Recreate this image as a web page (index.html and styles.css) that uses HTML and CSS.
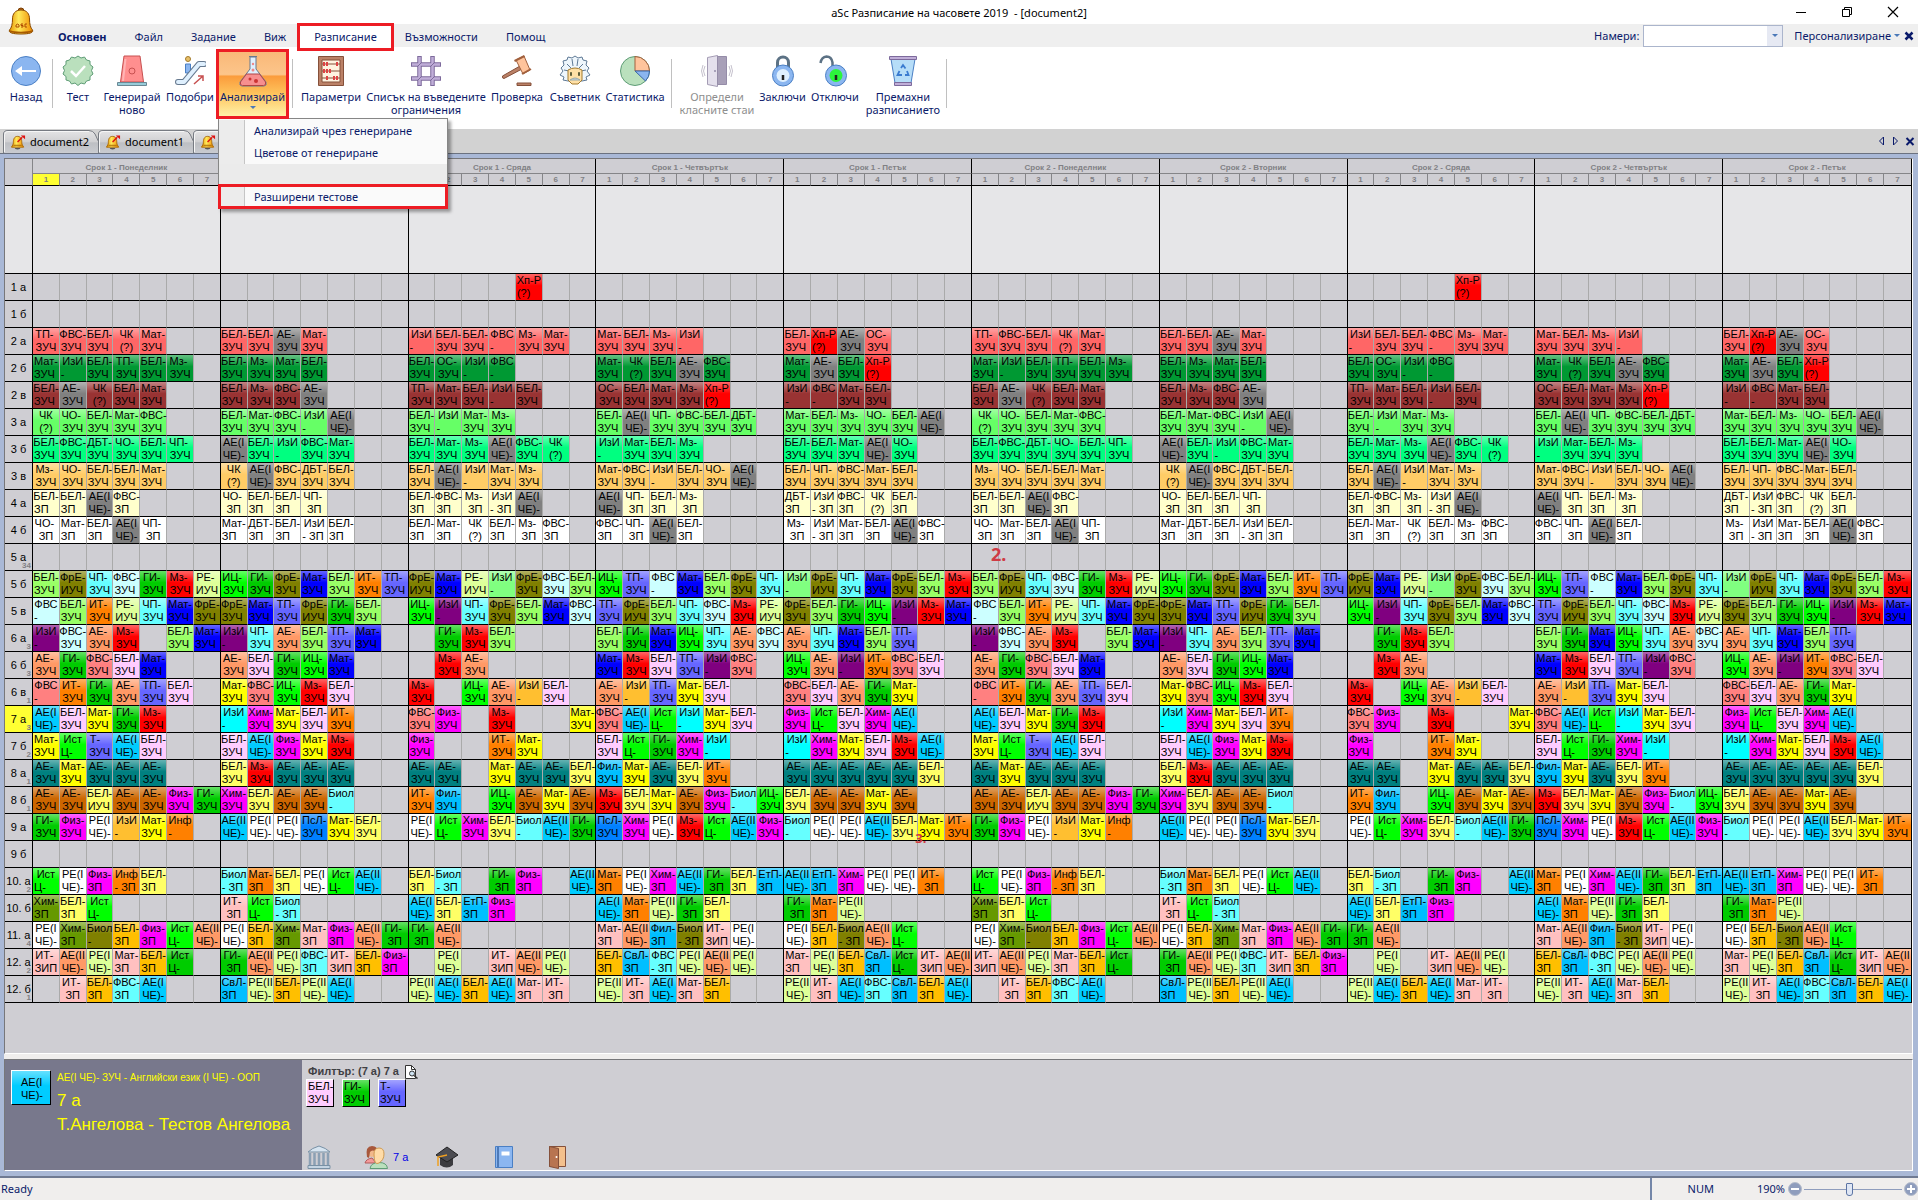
FILE: index.html
```html
<!DOCTYPE html>
<html lang="bg">
<head>
<meta charset="utf-8">
<title>aSc Разписание на часовете 2019 - [document2]</title>
<link rel="stylesheet" href="styles.css">
</head>
<body>
<svg class="defs" aria-hidden="true">
  <defs>
    <linearGradient id="gold" x1="0" x2="1" y1="0" y2="0"><stop offset="0" stop-color="#e89400"/><stop offset=".4" stop-color="#ffe95a"/><stop offset="1" stop-color="#f08c00"/></linearGradient>
    <linearGradient id="tabfill" x1="0" x2="0" y1="0" y2="1"><stop offset="0" stop-color="#e4e4e5"/><stop offset=".5" stop-color="#d0d0d2"/><stop offset=".55" stop-color="#bdbfc3"/><stop offset="1" stop-color="#c9cbd0"/></linearGradient>
    <symbol id="bell" viewBox="0 0 26 30">
      <circle cx="13" cy="4" r="3" fill="#b5651d" stroke="#7a3d00"/>
      <path d="M13 3c6 0 8.500 4 8.500 9 0 5 1 9 3 11 1 2-1 4-11.500 4S.5 25 1.500 23c2-2 3-6 3-11 0-5 2.500-9 8.500-9z" fill="url(#gold)" stroke="#8a4a00"/>
      <path d="M2 24c5 2 17 2 22 0" fill="none" stroke="#a85a00" stroke-width="1.500"/>
      <path d="M8 18q2-2 3 0v2H8zM15 17h-2v1.500h2V20h-2M19 17h-2v3h2" fill="none" stroke="#b04a00"/>
    </symbol>
    <symbol id="minibell" viewBox="0 0 16 16">
      <path d="M4 14.500a3 1.500 0 0 0 6 0z" fill="#555"/>
      <path d="M7 2c4 0 4.500 4 4.500 6.500s1 3 2 5H.5c1-2 2-2.500 2-5S3 2 7 2z" fill="url(#gold)" stroke="#a86400"/>
      <path d="M2.500 11.500h9" stroke="#a86400"/>
      <path d="M7 8l5-5" stroke="#d11" stroke-width="1.500"/><path d="M10.500 1H15v4z" fill="#d11"/>
    </symbol>
    <symbol id="doctab" viewBox="0 0 104 24" preserveAspectRatio="none">
      <path d="M.5 24V5Q.5 1.500 5 1.500H86Q90 1.500 92 5L99 20Q101 23.500 104 23.500" fill="url(#tabfill)" stroke="#777b82"/>
      <path d="M1.500 23V5.500Q2 2.500 5 2.500H86" fill="none" stroke="#f6f6f6"/>
    </symbol>
  </defs>
</svg>

<header class="titlebar">
  <svg class="app-bell"><use href="#bell"/></svg>
  <h1 class="title">aSc Разписание на часовете 2019 &nbsp;- [document2]</h1>
  <div class="window-buttons">
    <button aria-label="Minimize"><svg viewBox="0 0 12 12"><path d="M1 6.500h10" stroke="#000"/></svg></button>
    <button aria-label="Restore"><svg viewBox="0 0 12 12" fill="none" stroke="#000"><path d="M1.500 3.500h7v7h-7zM3.500 3.500v-2h7v7h-2"/></svg></button>
    <button aria-label="Close"><svg viewBox="0 0 12 12"><path d="M1 1l10 10M11 1L1 11" stroke="#000" stroke-width="1.200"/></svg></button>
  </div>
</header>

<nav class="menubar">
  <div class="tabs">
    <button class="tab main">Основен</button>
    <button class="tab">Файл</button>
    <button class="tab">Задание</button>
    <button class="tab">Виж</button>
    <button class="tab active">Разписание</button>
    <button class="tab">Възможности</button>
    <button class="tab">Помощ</button>
  </div>
  <div class="tools">
    <label for="find">Намери:</label>
    <div class="combo"><input id="find" type="text"><button aria-label="Списък"><i class="down"></i></button></div>
    <button class="customize">Персонализиране<i class="down"></i></button>
    <button class="bold-x" aria-label="Затвори"><svg viewBox="0 0 10 10"><path d="M1.500 1.500l7 7M8.500 1.500l-7 7" stroke="#0a1a6a" stroke-width="2.500"/></svg></button>
  </div>
</nav>

<div class="ribbon">
  <button class="tool"><svg viewBox="0 0 32 32"><circle cx="16" cy="16" r="14.500" fill="#8bb6f0" stroke="#4a7fc4"/><path d="M26 15h-14v-4l-7 5 7 5v-4h14z" fill="#fff"/></svg>Назад</button>
  <span class="sep"></span>
  <button class="tool"><svg viewBox="0 0 32 32"><path d="M16 1l3 2 3.500-1 2 3 3.500 1 0 3.500 3 2.500-1.500 3.500L31 19l-3 2.500V25l-3.500 1-2 3-3.500-1-3 2.500-3-2.500-3.500 1-2-3L4 25v-3.500L1 19l1.500-3.500L1 12l3-2.500V6l3.500-1 2-3L13 3z" fill="#bae0bd" stroke="#5e9c76"/><path d="M9 16l5 5 9-10" fill="none" stroke="#fff" stroke-width="2.500"/></svg>Тест</button>
  <button class="tool"><svg viewBox="0 0 32 32"><path d="M8 1h16l3.500 26h-23z" fill="#ff8f8f" stroke="#c75050"/><circle cx="16" cy="16" r="3" fill="#ff8f8f" stroke="#c75050"/><path d="M9.500 4L7 26" stroke="#ffb5b5" stroke-width="2"/><path d="M1.500 27.500h29v3h-29z" fill="#98ccd9" stroke="#6a8895"/></svg>Генерирай<br>ново</button>
  <button class="tool"><svg viewBox="0 0 32 32"><circle cx="14" cy="4" r="2.500" fill="#e8c06a" stroke="#a37a2c"/><path d="M11.500 9h5v9h-5z" fill="#8bb6f0" stroke="#4a7fc4"/><path d="M4 27h6L25 9h5" fill="none" stroke="#66798f" stroke-width="6" stroke-linecap="round" stroke-linejoin="round"/><path d="M4 27h6L25 9h5" fill="none" stroke="#dff0fe" stroke-width="4" stroke-linecap="round" stroke-linejoin="round"/><path d="M20 29l9-8m-5 0h5v5" fill="none" stroke="#c75050" stroke-width="1.500"/></svg>Подобри</button>
  <div class="dropdown">
    <button class="tool open" aria-expanded="true"><svg viewBox="0 0 32 32"><path d="M12 1.500h8M13 2v12L3 27q-1 4 2 4h22q3 0 2-4L19 14V2z" fill="#dff0fe" stroke="#66798f"/><path d="M9.500 19h13l6 8q1 3.500-2 3.500h-21q-3 0-2-3.500z" fill="#f78f8f" stroke="#b04646"/><circle cx="16" cy="9" r="1.200" fill="#e88"/><circle cx="16" cy="15" r="1.500" fill="#e88"/><circle cx="13" cy="24" r="1.500" fill="#c33"/><circle cx="19" cy="26" r="2" fill="#c33"/></svg>Анализирай<i class="down"></i></button>
    <ul class="menu">
      <li><button>Анализирай чрез генериране</button></li>
      <li><button>Цветове от генериране</button></li>
      <li class="divider"></li>
      <li class="marked"><button>Разширени тестове</button></li>
    </ul>
  </div>
  <span class="sep"></span>
  <button class="tool"><svg viewBox="0 0 32 32"><path d="M3.500 1.500h25v29h-25z" fill="#bb8167" stroke="#85503a"/><path d="M7 5h18v22H7z" fill="#fff3e0" stroke="#85503a"/><path d="M7 9h18M7 16h18M7 23h18" stroke="#85503a"/><path d="M9 7v4M12 7v4M22 7v4M9 14v4M12 14v4M15 14v4M12 21v4M19 21v4M22 21v4" stroke="#d44" stroke-width="2"/></svg>Параметри</button>
  <button class="tool"><svg viewBox="0 0 32 32"><g fill="none" stroke="#7d6a9c" stroke-width="4.500"><path d="M9.500 1v30M22.500 1v30M1 9.500h30M1 23.500h30"/></g><g fill="none" stroke="#c0aed8" stroke-width="2.500"><path d="M9.500 2v28M22.500 2v28M2 9.500h28M2 23.500h28"/></g><path d="M7 12l5-5M20 12l5-5M7 26l5-5M20 26l5-5" stroke="#7d6a9c"/></svg>Списък на въведените<br>ограничения</button>
  <button class="tool"><svg viewBox="0 0 32 32"><path d="M1.500 21L19 11l2 3L3 23.500q-2 0-1.500-2.500z" fill="#bb8167" stroke="#85503a"/><path d="M15 5l8-4 6 14-7 4z" fill="#ffc49c" stroke="#a1603d"/><path d="M13.500 6l10-5M21 19l9-5" stroke="#a1603d" stroke-width="2"/><path d="M16 28h14v2.500H16z" fill="#bb8167" stroke="#85503a"/></svg>Проверка</button>
  <button class="tool"><svg viewBox="0 0 32 32"><path d="M16 1l3 2 4-1 1 3 4 1-1 4 3 3-2 3 3 4-4 2 1 3-5 1H9l-5-1 1-3-4-2 3-4-2-3 3-3-1-4 4-1 1-3 4 1z" fill="#eef6fc" stroke="#5f7a96"/><path d="M8 9l4 4M24 9l-4 4M13 4l1 7M19 4l-1 7M5 15l5 1M27 15l-5 1" stroke="#5f7a96"/><path d="M9 15q7-4 14 0v10l-4 4h-6l-4-4z" fill="#ffe0a6" stroke="#a37a2c"/><path d="M12 17v4M20 17v4M11 19h2M19 19h2" stroke="#553" stroke-width="1.500"/><path d="M11 25q5-4 10 0z" fill="#cfd8e0" stroke="#9aa"/></svg>Съветник</button>
  <button class="tool"><svg viewBox="0 0 32 32"><circle cx="16" cy="16" r="14.500" fill="#bae0bd" stroke="#5e9c76"/><path d="M16 16V1.500A14.500 14.500 0 0 1 30.500 16z" fill="#ffc49c" stroke="#a1603d"/><path d="M16 16h14.500a14.500 14.500 0 0 1-4 10z" fill="#8bb6f0" stroke="#3a66a4"/></svg>Статистика</button>
  <span class="sep"></span>
  <button class="tool" disabled><svg viewBox="0 0 32 32"><path d="M6.500 2.500l10-2v31l-10-2z" fill="#e4e0ec" stroke="#a49cb4"/><path d="M16.500 1.500h9v28h-9z" fill="#a8a0b8" stroke="#958ca8"/><circle cx="14" cy="16" r="1" fill="#958ca8"/><path d="M4 11q-3 5 0 10M2 10q-3 6 0 12M28 11q3 5 0 10M30 10q3 6 0 12" fill="none" stroke="#c4c0cc"/></svg>Определи<br>класните стаи</button>
  <button class="tool"><svg viewBox="0 0 32 32"><path d="M10.500 14V7.500a5.500 5.500 0 0 1 11 0V14" fill="none" stroke="#5c7285" stroke-width="3"/><circle cx="16" cy="20.500" r="10.500" fill="#8bb6f0" stroke="#4a7fc4"/><circle cx="16" cy="20.500" r="6.500" fill="#dff0fe"/><path d="M16 20v5" stroke="#222" stroke-width="2.500"/></svg>Заключи</button>
  <button class="tool"><svg viewBox="0 0 32 32"><path d="M1.500 8q1-6 6-6.500 5 0 6 6V12" fill="none" stroke="#5c7285" stroke-width="2.500"/><circle cx="17" cy="20.500" r="10.500" fill="#8bb6f0" stroke="#4a7fc4"/><circle cx="17" cy="20.500" r="6.500" fill="#2cf53c"/><path d="M17 20v5" stroke="#222" stroke-width="2.500"/></svg>Отключи</button>
  <button class="tool"><svg viewBox="0 0 32 32"><path d="M4 4h24l-4 24H8z" fill="#b6ddf8" stroke="#4a7fc4"/><path d="M2.500 1.500h27v3h-27zM7.500 27.500h17v3h-17z" fill="#c0aed8" stroke="#7d6a9c"/><path d="M14 13l2-3 2.500 3.500M20 16l1.500 4H18M15 20h-4.500l2-4" fill="none" stroke="#3a7bd0" stroke-width="1.800"/></svg>Премахни<br>разписанието</button>
  <span class="sep"></span>
</div>

<div class="docbar">
  <div class="doctabs">
    <button class="doctab"><svg class="shape"><use href="#doctab"/></svg><svg class="mini"><use href="#minibell"/></svg><span>document2</span></button>
    <button class="doctab"><svg class="shape"><use href="#doctab"/></svg><svg class="mini"><use href="#minibell"/></svg><span>document1</span></button>
    <button class="doctab" aria-label="Документ"><svg class="shape"><use href="#doctab"/></svg><svg class="mini"><use href="#minibell"/></svg></button>
  </div>
  <div class="docnav">
    <button aria-label="Назад"><svg viewBox="0 0 10 10"><path d="M6.500 1v8L2.500 5z" fill="none" stroke="#0a1a6a"/></svg></button>
    <button aria-label="Напред"><svg viewBox="0 0 10 10"><path d="M2.500 1v8l4-4z" fill="none" stroke="#0a1a6a"/></svg></button>
    <button aria-label="Затвори"><svg viewBox="0 0 10 10"><path d="M1.500 2l7 7M8.500 2l-7 7" stroke="#0a1a6a" stroke-width="2"/></svg></button>
  </div>
</div>

<main class="frame">
  <section class="grid-panel">
    <table class="timetable">
      <colgroup id="cols"><col class="name-col"></colgroup>
      <thead id="head"></thead>
      <tbody id="rows"></tbody>
    </table>
  </section>
  <section class="detail">
    <div class="lesson">
      <div class="card big sky"><span>АЕ(I</span><span>ЧЕ)-</span></div>
      <div class="lesson-text">
        <p class="small">АЕ(I ЧЕ)- ЗУЧ - Английски език (I ЧЕ) - ООП</p>
        <p>7 а</p>
        <p>Т.Ангелова - Тестов Ангелова</p>
      </div>
    </div>
    <div class="filter">
      <div class="filter-title">Филтър: (7 а) 7 а
        <svg viewBox="0 0 14 14"><path d="M1.500 13.500V.5h6l4 4v9z" fill="#fff" stroke="#333"/><path d="M7.500.5v4h4" fill="none" stroke="#333"/><circle cx="8" cy="8.500" r="2.500" fill="#cfe4f4" stroke="#333"/><path d="M10 10.500l3.500 3" stroke="#333" stroke-width="1.500"/></svg>
      </div>
      <div class="cards">
        <div class="card pink"><span>БЕЛ-</span><span>ЗУЧ</span></div>
        <div class="card green"><span>ГИ-</span><span>ЗУЧ</span></div>
        <div class="card violet"><span>Т-</span><span>ЗУЧ</span></div>
      </div>
      <div class="shortcuts">
        <button aria-label="Училище"><svg viewBox="0 0 24 24"><path d="M1 7q4-4 11-6 7 2 11 6z" fill="#d6e4f0" stroke="#7890a4"/><path d="M3 8v12M7.500 8v12M12 8v12M16.500 8v12M21 8v12" stroke="#8ba0b4" stroke-width="2.500"/><path d="M1 20.500h22v3H1z" fill="#c4d4e2" stroke="#7890a4"/></svg></button>
        <button class="group"><svg viewBox="0 0 24 24"><path d="M1 18q1-4 7-5l4 5z" fill="#f49a9a" stroke="#b05a5a"/><circle cx="8" cy="7" r="5" fill="#f2b98c"/><path d="M3 12Q1 1 8 1q6 0 5 6-5-3-7 0l-1 6z" fill="#a8583c"/><path d="M6 23.500q1-6 9-6t8.500 6z" fill="#bae0bd" stroke="#5e9c76"/><path d="M10 9q0-6 5-6t5 6-5 9-5-9z" fill="#ffdca8" stroke="#d09a50"/></svg>7 а</button>
        <button aria-label="Учител"><svg viewBox="0 0 24 24"><path d="M5 11v9q7 5 13 0v-9z" fill="#3c3c40"/><path d="M12 2l11 8-11 7L1 10z" fill="#4c4c52" stroke="#222"/><path d="M12 10L3 12v9" fill="none" stroke="#f0a020" stroke-width="1.500"/></svg></button>
        <button aria-label="Предмет"><svg viewBox="0 0 24 24"><path d="M3.500 1.500h17v21h-17z" fill="#8bb6f0" stroke="#4a7fc4"/><path d="M6 2v20" stroke="#3a66a4" stroke-width="1.500"/><path d="M9.500 6.500h8v4h-8z" fill="#fff"/></svg></button>
        <button class="room" aria-label="Стая"><svg viewBox="0 0 24 24"><path d="M4.500 1.500h16v20h-16z" fill="#f4c08c" stroke="#85503a"/><path d="M4.500 1.500l9 2v20l-9-2z" fill="#b87450" stroke="#85503a"/><circle cx="11.500" cy="12" r="1" fill="#fff"/></svg></button>
      </div>
    </div>
  </section>
</main>

<footer class="statusbar">
  <span>Ready</span>
  <div class="status-right">
    <span>NUM</span>
    <label class="percent" for="zoom">190%</label>
    <button class="round" aria-label="Намали"><svg viewBox="0 0 14 14"><circle cx="7" cy="7" r="6.500" fill="#8f9dbd" stroke="#b6bccb"/><path d="M3 7h8" stroke="#fff" stroke-width="2"/></svg></button>
    <input id="zoom" type="range" min="10" max="400" value="190">
    <button class="round" aria-label="Увеличи"><svg viewBox="0 0 14 14"><circle cx="7" cy="7" r="6.500" fill="#8f9dbd" stroke="#b6bccb"/><path d="M3 7h8M7 3v8" stroke="#fff" stroke-width="2"/></svg></button>
  </div>
</footer>
<script src="timetable.js"></script>
</body>
</html>
```
FILE: styles.css
```css
* { box-sizing: border-box; }
body {
  margin: 0;
  min-height: 100vh;
  display: flex;
  flex-direction: column;
  background: #fff;
  color: #0a1a6a;
  font: 11px/16px "Noto Sans", "Open Sans", sans-serif;
}
button, input { font: inherit; color: inherit; border: 0; padding: 0; margin: 0; background: none; }
ul, p, h1 { margin: 0; padding: 0; list-style: none; font-weight: normal; }
svg { display: block; }
.defs { position: absolute; width: 0; height: 0; }
.down { display: block; width: 0; border: 3px solid transparent; border-top-color: #4a78b8; border-bottom: 0; }

.titlebar { position: relative; height: 24px; display: flex; align-items: center; color: #000; }
.app-bell { position: absolute; left: 8px; top: 7px; width: 26px; height: 30px; z-index: 2; }
.title { flex: 1; text-align: center; font-size: 11px; line-height: 16px; padding-top: 2px; }
.window-buttons { position: absolute; right: 2px; display: flex; }
.window-buttons button { width: 46px; display: grid; place-items: center; }
.window-buttons svg { width: 12px; height: 12px; }

.menubar { height: 23px; background: #efefef; display: flex; justify-content: space-between; align-items: center; }
.tabs { display: flex; align-items: center; padding: 2px 0 0 44px; }
.tab { height: 22px; padding: 0 14px; }
.main { font-weight: bold; }
.tab.active { height: 28px; border: 3px solid #ed1c24; background: #fff; z-index: 3; margin: 0 -3px; }
.tools { display: flex; align-items: center; }
.combo { display: flex; width: 140px; height: 22px; margin-left: 4px; background: #fff; border: 1px solid #abb5cc; }
.combo input { flex: 1; min-width: 0; }
.combo button { width: 15px; background: #e6e9f3; display: grid; place-items: center; }
.customize { display: flex; align-items: center; gap: 3px; margin-left: 11px; }
.bold-x { margin: 0 4px 0 4px; }
.bold-x svg { width: 10px; height: 10px; }

.ribbon {
  height: 82px;
  display: grid;
  grid-template-columns: 52px 1px 50px 58px 58px 69px 9px 68px 122px 60px 56px 64px 8px 84px 47px 58px 78px 9px;
}
.tool {
  display: grid; grid-template-rows: 35px auto; justify-items: center; align-content: start;
  width: 100%; height: 82px; padding-top: 8px;
  line-height: 13px; white-space: nowrap; text-align: center;
}
.tool svg { width: 32px; height: 32px; }
.tool:disabled { color: #8e8e8e; }
.sep { justify-self: center; width: 1px; height: 49px; margin-top: 12px; background: #c0c0c0; }
.dropdown { position: relative; }
.tool.open {
  position: relative; z-index: 6;
  width: 73px; height: 70px; margin: 2px 0 0 -3px; padding-top: 3px;
  border: 3px solid #ed1c24;
  background: linear-gradient(#f9b878, #fcc58a 35%, #fb9c3c 38%, #fec35c 65%, #fff1a8);
}
.open .down { margin-top: 3px; }
.menu {
  position: absolute; z-index: 5; left: -1px; top: 71px; width: 230px; padding-top: 1px;
  background: #fafafa; border: 1px solid #868686; box-shadow: 3px 3px 3px rgba(0, 0, 0, .35);
}
.menu li { height: 22px; padding-left: 26px; background: linear-gradient(90deg, #ececec 25px, #c5c5c5 25px, #c5c5c5 26px, #fafafa 26px); }
.menu button { height: 100%; width: 100%; padding-left: 9px; text-align: left; white-space: nowrap; }
.menu .divider { height: 20px; background: #ebebeb; }
.menu .marked { height: 25px; border: 3px solid #ed1c24; padding-left: 24px; margin: 0 -1px -1px; background: linear-gradient(90deg, #ececec 23px, #c5c5c5 23px, #c5c5c5 24px, #fafafa 24px); }

.docbar { height: 24px; background: #d2d2d2; display: flex; justify-content: space-between; padding-left: 3px; }
.doctabs { display: flex; }
.doctab { position: relative; width: 95px; display: flex; align-items: center; gap: 4px; padding: 1px 0 0 8px; color: #000; }
.shape { position: absolute; left: 0; top: 0; width: 104px; height: 24px; }
.mini { position: relative; width: 15px; height: 16px; }
.doctab span { position: relative; }
.docnav { display: flex; align-items: center; gap: 4px; padding-right: 3px; }
.docnav svg { width: 10px; height: 10px; }

.frame {
  flex: 1;
  display: flex; flex-direction: column; gap: 5px;
  padding: 4px 5px 5px 4px;
  background: #a9b8d6;
  border-top: 1px solid #6b7280; border-bottom: 2px solid #6f7a92;
}
.grid-panel { flex: 1; background: #cfced3; border: 1px solid #77777a; border-right-color: #fff; border-bottom-color: #fff; box-shadow: 0 5px #f0eeed; }
.timetable { width: 100%; table-layout: fixed; border-collapse: separate; border-spacing: 0; color: #000; font: 11px/13px "Liberation Sans", Arial, sans-serif; }
.name-col { width: 28px; }
.timetable th, .timetable td { padding: 0; font-weight: normal; border: 0 solid #000; }
.timetable .day, .timetable .period { color: #808084; font-size: 8px; font-weight: bold; line-height: 11px; }
.timetable .day { height: 15px; padding-top: 2px; border-right-width: 1px; border-bottom: 1px solid #858588; }
.timetable .period { height: 12px; border-right: 1px solid #858588; border-bottom: 1px solid #000; }
.timetable .corner { border-right: 1px solid #858588; border-bottom-width: 1px; }
.timetable .current { background: #ffff33; }
.timetable .spare { height: 88px; background: #e6e6e8; border-right-width: 1px; border-bottom-width: 1px; }
.timetable .class-name { position: relative; height: 27px; border-right-width: 1px; border-bottom-width: 1px; }
.count { position: absolute; right: 1px; bottom: 0; font-size: 8px; line-height: 8px; font-weight: bold; color: #808084; }
.timetable .slot { position: relative; height: 27px; border-right: 1px solid #aaa; border-bottom: 1px solid #000; vertical-align: top; }
.timetable .last { border-right-color: #000; }
.filled { background-image: linear-gradient(rgba(255, 255, 255, .4), rgba(255, 255, 255, 0) 45%); }
.slot span { height: 13px; white-space: pre; display: flex; justify-content: center; }
.slot .left { justify-content: flex-start; padding-left: 1px; }
.note { position: absolute; z-index: 2; left: 19px; top: 0; color: #cf3a44; font: bold 18px/20px "Noto Sans", sans-serif; }
.note.low { left: -3px; top: 16px; font-size: 13px; line-height: 16px; }

.detail { display: flex; background: #cfced3; height: 112px; border: 1px solid #77777a; border-right-color: #fff; border-bottom-color: #fff; font-family: "Liberation Sans", Arial, sans-serif; }
.lesson { width: 297px; background: #78788c; color: #ff0; display: flex; gap: 6px; padding: 10px 6px; }
.lesson-text { white-space: nowrap; font-size: 17px; line-height: 24px; }
.lesson-text .small { font-size: 10px; line-height: 14px; margin: 1px 0 4px; }
.card {
  width: 28px; height: 28px; padding-left: 1px; color: #000; font-size: 11px; line-height: 13px; white-space: nowrap;
  border: 1px solid #000; border-top-color: #fff; border-left-color: #fff;
  background-image: linear-gradient(rgba(255, 255, 255, .4), rgba(255, 255, 255, 0) 45%);
}
.card span { display: block; }
.card.big { width: 40px; height: 35px; padding: 5px 0 0 9px; flex: none; }
.sky { background-color: #00ccff; }
.pink { background-color: #ffccff; }
.green { background-color: #00cc00; }
.violet { background-color: #6666ff; }
.filter { flex: 1; display: flex; flex-direction: column; padding: 4px 4px 1px; }
.filter-title { display: flex; align-items: center; gap: 5px; font-weight: bold; line-height: 15px; color: #404044; padding-left: 2px; }
.filter-title svg { width: 14px; height: 14px; }
.cards { display: flex; gap: 8px; }
.shortcuts { display: flex; margin-top: auto; padding-left: 1px; gap: 33px; color: #0000e6; }
.shortcuts svg { width: 24px; height: 24px; flex: none; }
.group { display: flex; align-items: center; gap: 5px; width: 38px; white-space: nowrap; }
.room { margin-left: -4px; }

.statusbar { height: 22px; background: #f0eeed; display: flex; justify-content: space-between; align-items: center; padding-left: 1px; }
.status-right { display: flex; align-items: center; height: 100%; border-left: 2px solid #7486a8; padding-left: 36px; }
.percent { margin: 0 3px 0 43px; }
.round svg { width: 14px; height: 14px; }
#zoom { appearance: none; width: 98px; height: 14px; margin: 0 2px; background: linear-gradient(#8f9dbd, #8f9dbd) center / 100% 1px no-repeat; }
#zoom::-webkit-slider-thumb { appearance: none; width: 7px; height: 13px; background: #dfe6f4; border: 1px solid #5c74a4; border-radius: 1px 1px 3px 3px; }
```
FILE: timetable.js
```js
// Lessons per class: five days split by "|", lessons by spaces, "." is a free period.
// Suffixes: "*" second line "-", "+" second line "- ЗП", "!" the ИУЧ / ЗИП variant.
const classes = [
  ["1 а", "", "ЗУЧ", "||. . . . Хп||"],
  ["1 б", "", "ЗУЧ", "||||"],
  ["2 а", "", "ЗУЧ", "ТП ФВС БЕЛ ЧК Мат|БЕЛ БЕЛ АЕ Мат|ИзИ* БЕЛ БЕЛ ФВС* Мз Мат|Мат БЕЛ Мз ИзИ*|БЕЛ Хп АЕ ОС"],
  ["2 б", "", "ЗУЧ", "Мат ИзИ* БЕЛ ТП БЕЛ Мз|БЕЛ Мз Мат БЕЛ|БЕЛ ОС ИзИ* ФВС*|Мат ЧК БЕЛ АЕ ФВС|Мат АЕ БЕЛ Хп"],
  ["2 в", "", "ЗУЧ", "БЕЛ АЕ ЧК БЕЛ Мат|БЕЛ Мз ФВС АЕ|ТП Мат БЕЛ ИзИ* БЕЛ|ОС БЕЛ Мат Мз Хп|ИзИ* ФВС* Мат БЕЛ"],
  ["3 а", "", "ЗУЧ", "ЧК ЧО БЕЛ Мат ФВС|БЕЛ Мат ФВС ИзИ* АЕ1|БЕЛ ИзИ* Мат Мз|БЕЛ АЕ1 ЧП ФВС БЕЛ ДБТ|Мат БЕЛ Мз ЧО БЕЛ АЕ1"],
  ["3 б", "", "ЗУЧ", "БЕЛ ФВС ДБТ ЧО БЕЛ ЧП|АЕ1 БЕЛ ИзИ* ФВС Мат|БЕЛ Мат Мз АЕ1 ФВС ЧК|ИзИ* Мат БЕЛ Мз|БЕЛ БЕЛ Мат АЕ1 ЧО"],
  ["3 в", "", "ЗУЧ", "Мз ЧО БЕЛ БЕЛ Мат|ЧК АЕ1 ФВС ДБТ БЕЛ|БЕЛ АЕ1 ИзИ* Мат Мз|Мат ФВС ИзИ* БЕЛ ЧО АЕ1|БЕЛ ЧП ФВС Мат БЕЛ"],
  ["4 а", "", "ЗП", "БЕЛ БЕЛ АЕ1 ФВС|ЧО БЕЛ БЕЛ ЧП|БЕЛ ФВС Мз ИзИ+ АЕ1|АЕ1 ЧП БЕЛ Мз|ДБТ ИзИ+ ФВС ЧК БЕЛ"],
  ["4 б", "", "ЗП", "ЧО Мат БЕЛ АЕ1 ЧП|Мат ДБТ БЕЛ ИзИ+ БЕЛ|БЕЛ Мат ЧК БЕЛ Мз ФВС|ФВС ЧП АЕ1 БЕЛ|Мз ИзИ+ Мат БЕЛ АЕ1 ФВС"],
  ["5 а", "34", "ЗУЧ", "||||"],
  ["5 б", "", "ЗУЧ", "БЕЛ ФрЕ! ЧП ФВС ГИ Мз РЕ!|ИЦ ГИ ФрЕ Мат БЕЛ ИТ ТП|ФрЕ! Мат РЕ! ИзИ* ФрЕ ФВС БЕЛ|ИЦ ТП ФВС* Мат БЕЛ ФрЕ ЧП|ИзИ* ФрЕ! ЧП Мат ФрЕ БЕЛ Мз"],
  ["5 в", "", "ЗУЧ", "ФВС* БЕЛ ИТ РЕ! ЧП Мат ФрЕ|ФрЕ Мат ТП ФрЕ! ГИ БЕЛ|ИЦ ИзИ* ЧП ФрЕ БЕЛ Мат ФВС|ТП ФрЕ! БЕЛ ЧП ФВС Мз РЕ!|ФрЕ БЕЛ ГИ ИЦ ИзИ* Мз Мат"],
  ["6 а", "3", "ЗУЧ", "ИзИ* ФВС АЕ Мз . БЕЛ Мат|ИзИ* ЧП АЕ БЕЛ ТП Мат|. ГИ Мз БЕЛ|БЕЛ ГИ Мат ИЦ ЧП АЕ ФВС|АЕ ЧП Мат БЕЛ ТП"],
  ["6 б", "3", "ЗУЧ", "АЕ ГИ ФВС БЕЛ Мат|АЕ БЕЛ ГИ ИЦ Мат|. Мз АЕ|Мат Мз БЕЛ ТП ИзИ* ФВС|ИЦ АЕ ИзИ* ИТ ФВС БЕЛ"],
  ["6 в", "1", "ЗУЧ", "ФВС* ИТ ГИ АЕ ТП БЕЛ|Мат ФВС ИЦ Мз БЕЛ|Мз . ИЦ АЕ ИзИ* БЕЛ|АЕ ИзИ* ТП Мат БЕЛ|ФВС БЕЛ АЕ ГИ Мат"],
  ["7 а", "3", "ЗУЧ", "АЕ1 БЕЛ Мат ГИ Мз|ИзИ* Хим Мат БЕЛ ИТ|ФВС Физ . Мз . . Мат|ФВС АЕ1 Ист ИзИ* Мат БЕЛ|Физ Ист БЕЛ Хим АЕ1"],
  ["7 б", "2", "ЗУЧ", "Мат Ист Т АЕ1 БЕЛ|БЕЛ АЕ1 Физ Мат Мз|Физ . . ИТ Мат|БЕЛ Ист ГИ Хим ИзИ*|ИзИ* Хим Мат БЕЛ Мз АЕ1"],
  ["8 а", "1", "ЗУЧ", "АЕ Мат АЕ АЕ АЕ|БЕЛ Мз АЕ АЕ АЕ|АЕ АЕ . Мат АЕ АЕ БЕЛ|Фил Мат АЕ БЕЛ ИТ|АЕ АЕ АЕ АЕ АЕ БЕЛ"],
  ["8 б", "1", "ЗУЧ", "АЕ АЕ БЕЛ! АЕ АЕ Физ ГИ|Хим БЕЛ АЕ АЕ Биол*|ИТ Фил . ИЦ АЕ Мат АЕ|Мз БЕЛ Мат АЕ Физ Биол* ИЦ|БЕЛ АЕ АЕ Мат АЕ"],
  ["9 а", "", "ЗУЧ", "ГИ Физ РЕ1 ИзИ* Мат Инф*|АЕ2 РЕ1 РЕ1 ПсЛ Мат БЕЛ|РЕ1 Ист Хим БЕЛ Биол* АЕ2 ГИ|ПсЛ Хим РЕ1 Мз Ист АЕ2 Физ|Биол* РЕ1 РЕ1 АЕ2 БЕЛ Мат ИТ"],
  ["9 б", "", "ЗУЧ", "||||"],
  ["10. а", "2", "ЗП", "Ист РЕ1 Физ Инф+ БЕЛ|Биол+ Мат БЕЛ РЕ1 Ист АЕ2|БЕЛ Биол+ . ГИ Физ . АЕ2|Мат РЕ1 Хим АЕ2 ГИ БЕЛ ЕтП|АЕ2 ЕтП Хим РЕ1 РЕ1 ИТ"],
  ["10. б", "", "ЗП", "Хим БЕЛ Ист|ИТ Ист Биол+|АЕ1 БЕЛ ЕтП Физ|АЕ1 Мат РЕ2 ГИ БЕЛ|ГИ Мат РЕ2"],
  ["11. а", "4", "ЗП", "РЕ1 Хим Биол* БЕЛ Физ Ист АЕ2|РЕ1 БЕЛ Хим Мат Физ АЕ2 ГИ|ГИ АЕ2|Мат АЕ2 Фил Биол+ ИТ! РЕ1|РЕ1 БЕЛ Биол+ АЕ2 Ист"],
  ["12. а", "2", "ЗП", "ИТ! АЕ2 РЕ1 Мат БЕЛ Ист|ГИ АЕ2 РЕ1 ФВС ИТ! БЕЛ Физ|. РЕ1 . ИТ! АЕ2 РЕ1|БЕЛ СвЛ ФВС+ РЕ1 АЕ2 РЕ1|Мат РЕ1 БЕЛ СвЛ Ист ИТ! АЕ2"],
  ["12. б", "1", "ЗП", ". ИТ БЕЛ ФВС АЕ1|СвЛ РЕ2 БЕЛ РЕ2 АЕ1|РЕ2 АЕ1 БЕЛ АЕ1 Мат ИТ|РЕ2 ИТ АЕ1 Мат БЕЛ|РЕ2 ИТ АЕ1 ФВС СвЛ БЕЛ АЕ1"]
];

const subjectColors = {
  "Хп": "#ff0000", "ФрЕ": "#808000", "ЧП": "#66ffff", "ГИ": "#00cc00", "Мз": "#ff0000", "РЕ": "#ddff99",
  "ИЦ": "#00ff00", "ИТ": "#ff8000", "ТП": "#6666ff", "Т": "#6666ff", "Хим": "#ff00ff", "Физ": "#ff00ff",
  "Ист": "#00ff00", "Фил": "#00bfff", "Биол": "#66ffff", "АЕ1": "#00ccff", "АЕ2": "#00ccff", "РЕ1": "#ffffff",
  "РЕ2": "#ddff99", "ПсЛ": "#0080ff", "Инф": "#ff8000", "ЕтП": "#00bfff", "СвЛ": "#00bfff", "АЕ": "#ff9966"
};
const grey = { "АЕ": "#808080", "АЕ1": "#808080", "Хп": "#ff0000" };
const junior = all => ({ all, ...grey });
const fifth = { "БЕЛ": "#99ff66", "ФВС": "#ccffff", "Мат": "#0000ff", "ИзИ": "#800080" };
const sixth = { "БЕЛ": "#ffccff", "ФВС": "#ff8080", "Мат": "#0000ff", "ИзИ": "#800080" };
const seventh = { "БЕЛ": "#ffccff", "ФВС": "#ff8080", "Мат": "#ffff00", "ИзИ": "#00ffff" };
const tenth = { "БЕЛ": "#ffff66", "Мат": "#ff8000" };
const senior = { "БЕЛ": "#ffbf00", "Мат": "#ffc0c0", "ИТ": "#ffc0c0", "АЕ2": "#ff9966", "ФВС": "#66ffff" };
const classColors = {
  "1 а": junior("#ff6666"), "2 а": junior("#ff6666"), "2 б": junior("#009933"), "2 в": junior("#993333"),
  "3 а": junior("#66ff66"), "3 б": junior("#00ff80"), "3 в": junior("#ffcc66"),
  "4 а": junior("#ffffcc"), "4 б": junior("#ffffff"),
  "5 б": { ...fifth, "ИзИ": "#80ff80" }, "5 в": fifth, "6 а": fifth, "6 б": sixth,
  "6 в": { ...sixth, "Мат": "#ffff00", "ИзИ": "#ffbf30" }, "7 а": seventh, "7 б": seventh,
  "8 а": { "АЕ": "#008080", "БЕЛ": "#ffff66", "Мат": "#ffff00" },
  "8 б": { "АЕ": "#cc6600", "БЕЛ": "#ffff66", "Мат": "#ffff00" },
  "9 а": { "БЕЛ": "#ffff66", "Мат": "#ffff00", "ИзИ": "#ffbf30" },
  "10. а": tenth, "10. б": { ...tenth, "Хим": "#669900", "ИТ": "#ffc0c0" },
  "11. а": { ...senior, "Хим": "#669900", "Биол": "#808000" },
  "12. а": { ...senior, "РЕ1": "#ddff99", "Ист": "#00cc00" }, "12. б": senior
};
const fixedText = {
  "ЧК": ["ЧК", "(?)"], "Хп": ["Хп-Р", "(?)"], "Ист": ["Ист", "Ц-"],
  "АЕ1": ["АЕ(I", "ЧЕ)-"], "АЕ2": ["АЕ(II", "ЧЕ)-"], "РЕ1": ["РЕ(I", "ЧЕ)-"], "РЕ2": ["РЕ(II", "ЧЕ)-"]
};
const notes = { "5 а/5/0": '<b class="note">2.</b>', "9 а/4/5": '<b class="note low">3.</b>' };

function lesson(token, name, kind) {
  const code = token.replace(/[*+!]/, "");
  const own = classColors[name];
  const color = own[code] || own.all || subjectColors[code];
  let [top, bottom] = fixedText[code] || [code + "-", kind];
  if (token.endsWith("*")) [top, bottom] = [code, "-"];
  if (token.endsWith("+")) [top, bottom] = [code, "- ЗП"];
  if (token.endsWith("!")) bottom = kind === "ЗП" ? "ЗИП" : "ИУЧ";
  const left = bottom !== "ЧЕ)-" && (top.length > 3 || /^(-|Ц)/.test(bottom));
  if (top.length < 4 && top.endsWith("-")) top += top.length < 3 ? "   " : " ";
  return { color, html: `<span>${top}</span><span class="${left ? "left" : ""}">${bottom}</span>` };
}

const dayNames = ["Понеделник", "Вторник", "Сряда", "Четвъртък", "Петък"];
const days = [1, 2].flatMap(term => dayNames.map(day => `Срок ${term} - ${day}`));
const periods = [1, 2, 3, 4, 5, 6, 7];

document.getElementById("cols").insertAdjacentHTML("beforeend", "<col>".repeat(70));
document.getElementById("head").innerHTML =
  '<tr><td class="corner" rowspan="2"></td>' + days.map(d => `<th class="day" colspan="7">${d}</th>`).join("") + "</tr><tr>" +
  days.map((d, i) => periods.map(p => `<th class="period ${p === 7 ? "last" : ""} ${i + p === 1 ? "current" : ""}">${p}</th>`).join("")).join("") + "</tr>";

let html = '<tr><td class="spare"></td>' + '<td class="spare" colspan="7"></td>'.repeat(10) + "</tr>";
for (const [name, count, kind, plan] of classes) {
  const week = plan.split("|").map(d => d.split(" "));
  html += `<tr><th class="class-name ${name === "7 а" ? "current" : ""}" scope="row">${name}<small class="count">${count}</small></th>`;
  days.forEach((d, i) => periods.forEach((p, j) => {
    const token = week[i % 5][j];
    const end = j === 6 ? "last" : "";
    const note = notes[`${name}/${i}/${j}`] || "";
    if (token && token !== ".") {
      const { color, html: text } = lesson(token, name, kind);
      html += `<td class="slot filled ${end}" style="background-color:${color}">${text}${note}</td>`;
    } else {
      html += `<td class="slot ${end}">${note}</td>`;
    }
  }));
  html += "</tr>";
}
document.getElementById("rows").innerHTML = html;
```
